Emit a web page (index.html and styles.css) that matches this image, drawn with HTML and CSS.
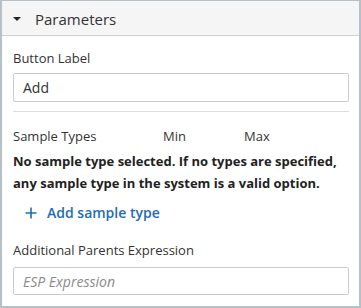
FILE: index.html
```html
<!DOCTYPE html>
<html>
<head>
<meta charset="utf-8">
<link rel="stylesheet" href="styles.css">
</head>
<body>
<div class="panel">
  <div class="panel-heading">
    <svg class="caret" width="8" height="4" viewBox="0 0 8 4"><path d="M0 0H8L4 4Z" fill="#222"/></svg>
    <span>Parameters</span>
  </div>
  <div class="panel-body">
    <div class="field field-first">
      <label class="label">Button Label</label>
      <input class="input" type="text" value="Add">
    </div>
    <div class="divider"></div>
    <div class="st-header">
      <span class="col-name">Sample Types</span>
      <span class="col-min">Min</span>
      <span class="col-max">Max</span>
    </div>
    <p class="empty">No sample type selected. If no types are specified, any sample type in the system is a valid option.</p>
    <button class="add-link" type="button">
      <svg class="plus" width="12" height="12" viewBox="0 0 12 12"><path d="M6 0.5V11.5M0.5 6H11.5" stroke="#1f6db0" stroke-width="1.6" fill="none"/></svg>
      <span>Add sample type</span>
    </button>
    <div class="field field-last">
      <label class="label">Additional Parents Expression</label>
      <input class="input" type="text" placeholder="ESP Expression">
    </div>
  </div>
</div>
</body>
</html>
```
FILE: styles.css
```css
html, body {
  margin: 0;
  padding: 0;
}
body {
  background: #b6c0c8;
  font-family: "Open Sans", "DejaVu Sans", sans-serif;
  color: #333;
  padding: 1px 2px 2px 2px;
  height: 308px;
  box-sizing: border-box;
}
.panel {
  background: #fff;
  height: 305px;
  box-sizing: border-box;
}
.panel-heading {
  background: #f5f5f5;
  border-bottom: 1px solid #d0d0d0;
  height: 35px;
  box-sizing: border-box;
  display: flex;
  align-items: center;
  padding-left: 11px;
  font-size: 15px;
  color: #333;
}
.caret {
  display: block;
  margin-right: 14px;
  margin-top: 2px;
}
.panel-heading span {
  line-height: 20px;
  margin-top: 1px;
}
.panel-body {
  padding: 13px 10px 0 11px;
}
.field {
  display: flex;
  flex-direction: column;
}
.label {
  font-size: 13px;
  line-height: 18px;
  color: #333;
  margin-bottom: 6px;
}
.field-last {
  margin-top: 18px;
}
.field-last .label {
  margin-bottom: 8px;
}
.input {
  box-sizing: border-box;
  height: 29px;
  border: 1px solid #ccc;
  border-radius: 2px;
  padding: 0 9px;
  font-family: "Open Sans", sans-serif;
  font-size: 14px;
  color: #333;
  outline: none;
  margin: 0;
  width: 100%;
}
.field-last .input {
  height: 28px;
}
.input::placeholder {
  color: #8a8a8a;
  font-style: italic;
}
.divider {
  height: 1px;
  background: #dcdcdc;
  margin-top: 9px;
}
.st-header {
  display: grid;
  grid-template-columns: 150px 81px auto;
  font-size: 13px;
  line-height: 18px;
  margin-top: 15px;
  color: #333;
}
.empty {
  margin: 6px 0 0 0;
  font-size: 13px;
  font-weight: 700;
  line-height: 21.6px;
  color: #222;
}
.add-link {
  display: flex;
  align-items: center;
  background: none;
  border: none;
  padding: 0 0 0 12px;
  margin-top: 9px;
  font-family: "Open Sans", sans-serif;
  font-size: 14px;
  font-weight: 600;
  line-height: 20px;
  color: #1f6db0;
  cursor: pointer;
}
.plus {
  display: block;
  margin-right: 10px;
}
```
